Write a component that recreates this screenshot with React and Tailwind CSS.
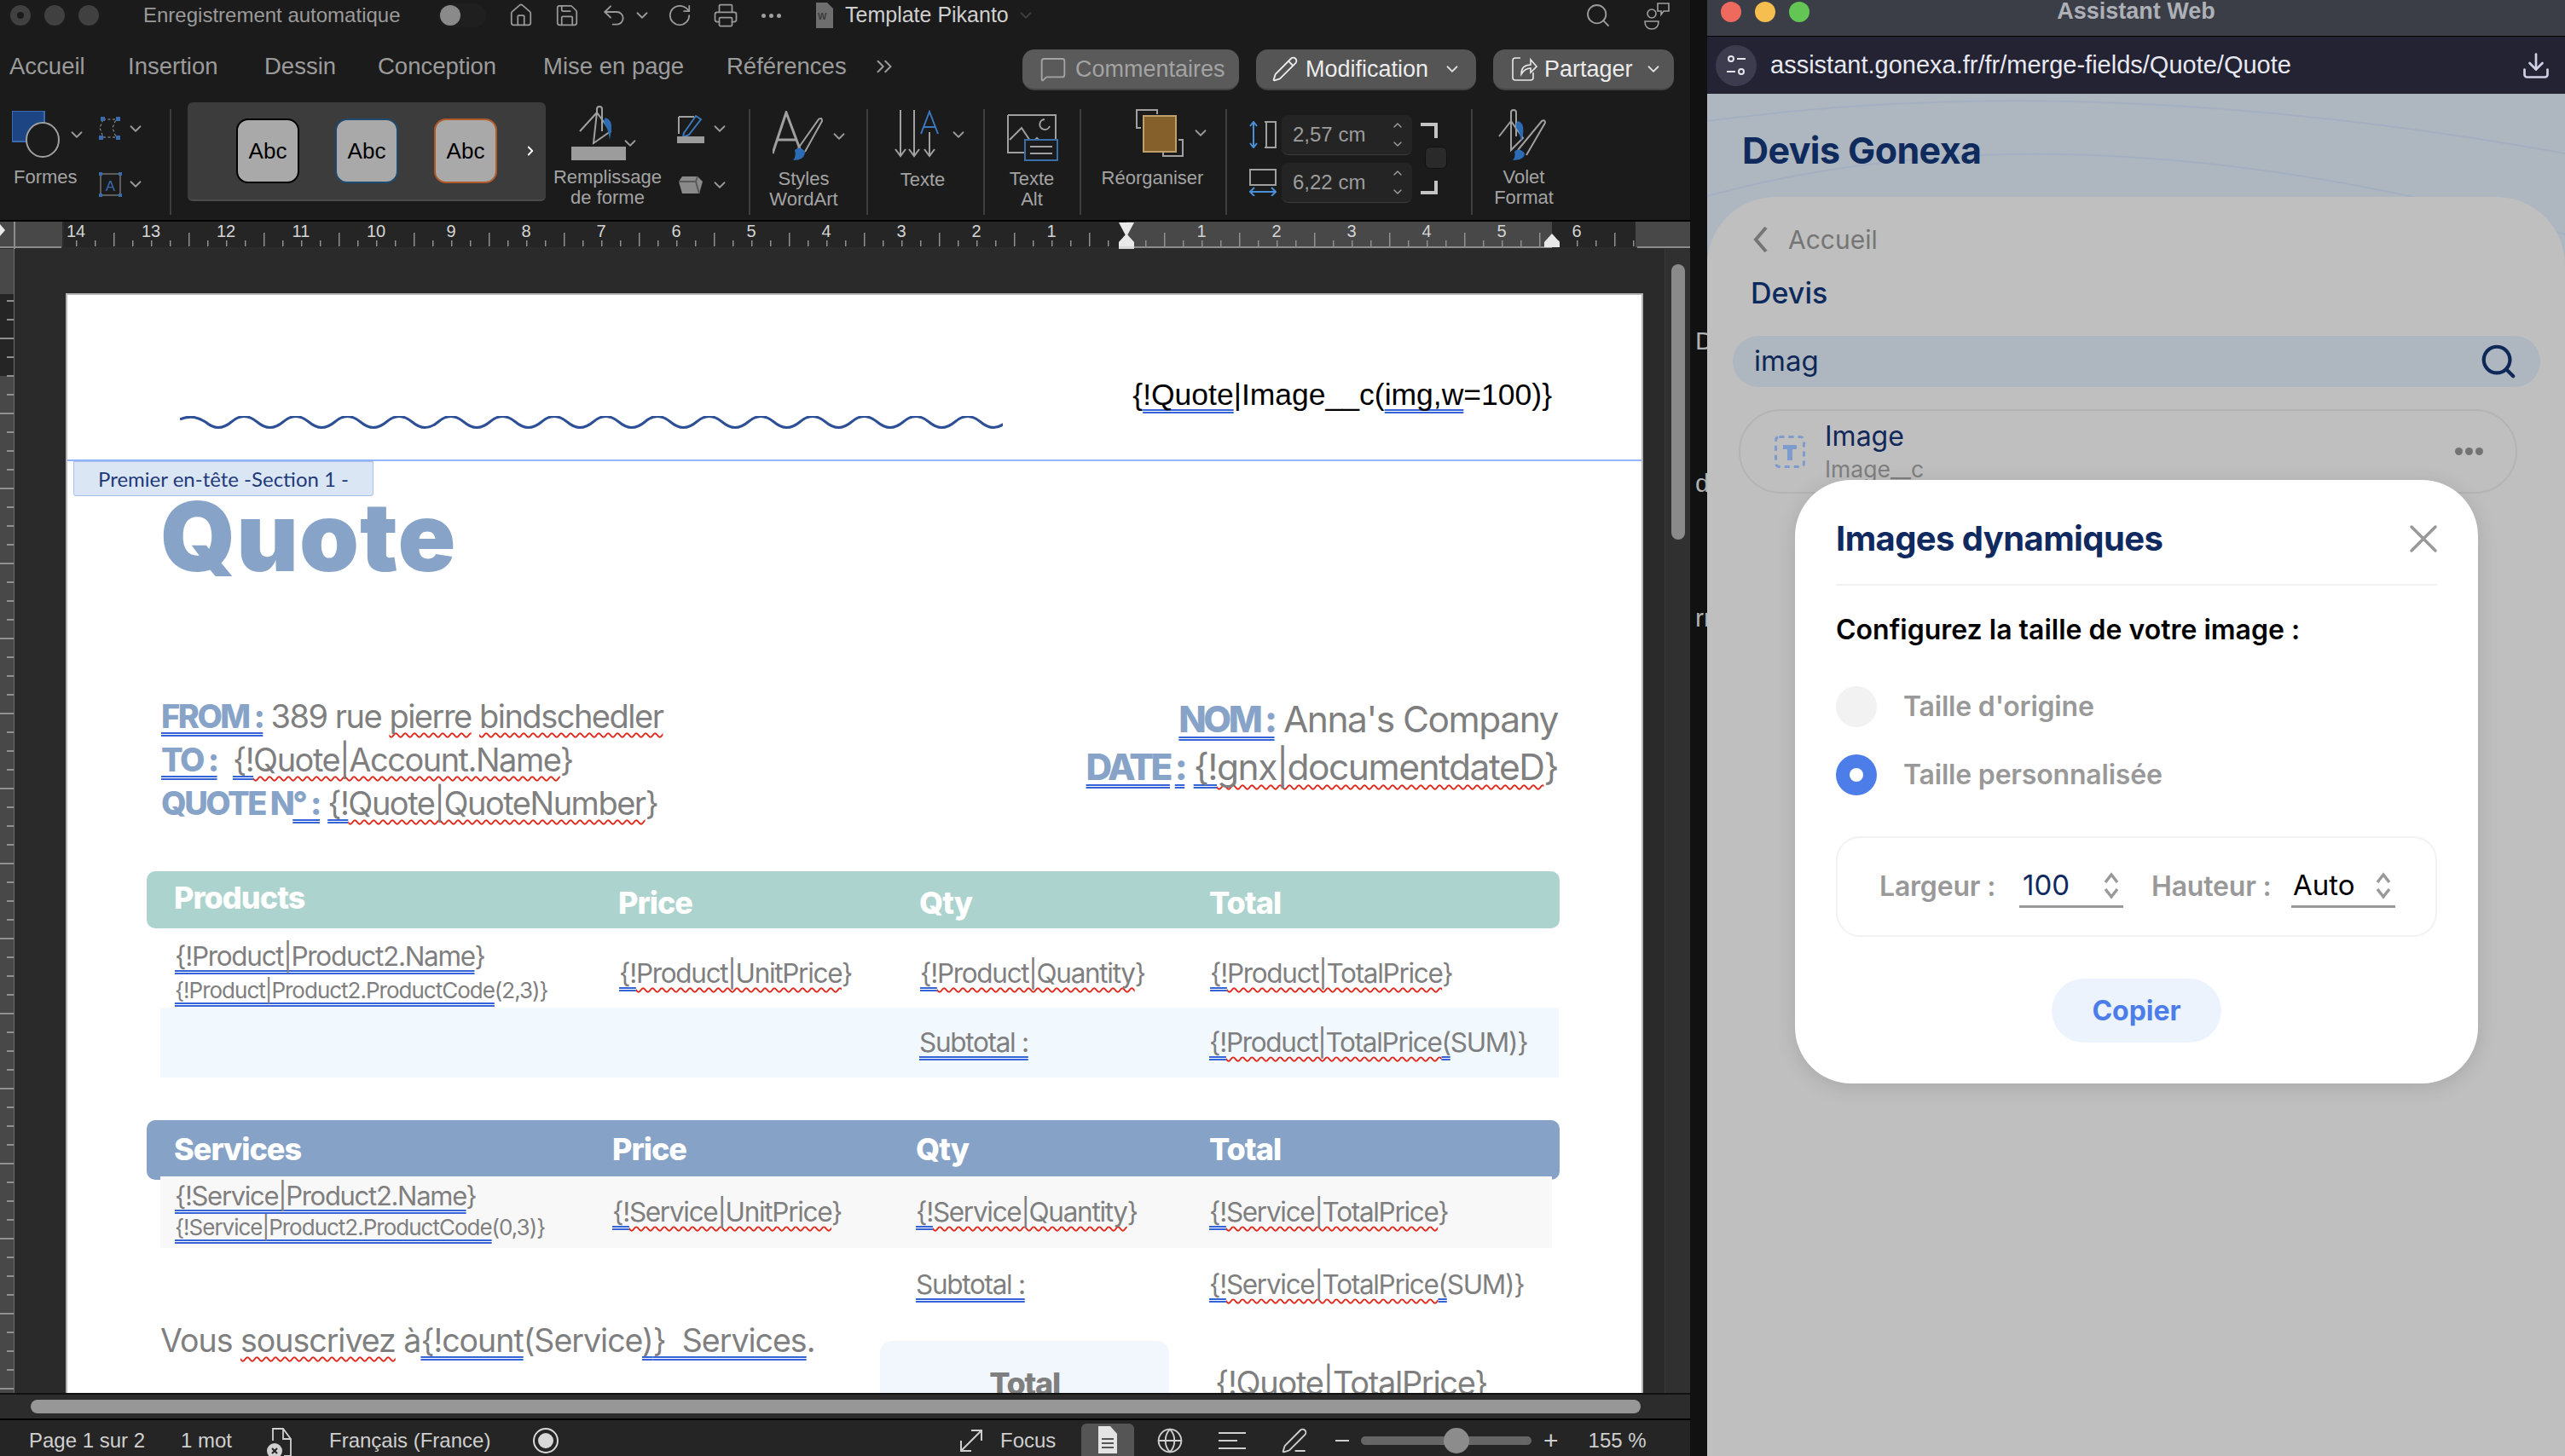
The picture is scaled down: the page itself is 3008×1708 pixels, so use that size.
import React from 'react';
import {
  House, Save, Undo2, RotateCw, Printer, Search, ChevronDown, ChevronRight, ChevronUp,
  ChevronsRight, MessageSquare, Pencil, Globe, X, PenLine, Download,
} from 'lucide-react';

// petit chevron des menus du ruban
const Chev = ({ className = '', tone = 'text-[#9a9a9a]' }) => (
  <div className={`w-[16px] h-[16px] shrink-0 flex items-center justify-center ${tone} ${className}`}>
    <ChevronDown className="w-[22px] h-[22px] shrink-0" strokeWidth={2} />
  </div>
);

const Sep = ({ className = '' }) => <div className={`w-[2px] h-[124px] mt-[8px] bg-[#3e3e3e] shrink-0 ${className}`} />;

const Label = ({ children, className = '' }) => (
  <div className={`text-[22px] leading-[24px] text-[#a3a3a3] text-center ${className}`}>{children}</div>
);

// soulignements de Word : double bleu (grammaire), ondulé rouge (orthographe)
const B = ({ children }) => (
  <span className="underline decoration-double decoration-[#3563d8] decoration-[1.5px] underline-offset-[5px] [text-decoration-skip-ink:none]">{children}</span>
);
const W = ({ children }) => (
  <span className="underline decoration-wavy decoration-[#e0291c] decoration-[1.5px] underline-offset-[5px] [text-decoration-skip-ink:none]">{children}</span>
);
const Field = ({ text }) => (
  <>
    <B>{'{!'}</B>
    <W>{text}</W>
    {'}'}
  </>
);

const wavePath = () => {
  let d = 'M0 4 Q15 -3 30 7';
  for (let x = 30; x < 950; x += 60.6) {
    d += ` Q${x + 15} 20 ${x + 30.3} 7 Q${x + 45} -6 ${x + 60.6} 7`;
  }
  return d;
};

const HRuler = () => {
  const zero = 1321;
  const marks = [];
  for (let x = zero - 14 * 88 - 22; x < 1920; x += 22) marks.push(x);
  const nums = [];
  for (let n = -14; n <= 6; n++) if (n !== 0) nums.push(n);
  return (
    <svg width="1982" height="32" className="block">
      <rect width="1982" height="32" fill="#2b2b2b" />
      <rect x="0" y="0" width="73" height="30" fill="#484848" />
      <rect x="75" y="0" width="1246" height="30" fill="#252525" />
      <rect x="1321" y="0" width="499" height="30" fill="#484848" />
      <rect x="1820" y="0" width="98" height="30" fill="#252525" />
      <rect x="1918" y="0" width="64" height="30" fill="#484848" />
      <rect x="16" y="0" width="2" height="32" fill="#8c8c8c" />
      <rect x="0" y="29" width="72" height="2" fill="#8c8c8c" />
      <rect x="1321" y="29" width="499" height="2" fill="#8c8c8c" />
      <rect x="1920" y="29" width="62" height="2" fill="#8c8c8c" />
      <polygon points="0,3 6,10 0,17" fill="#e8e8e8" />
      {marks.filter((x) => x > 80).map((x) => {
        const long = ((x - zero + 44 + 8800) % 88) === 0;
        return <rect key={x} x={x} y={long ? 13 : 22} width="1.5" height={long ? 16 : 7} fill="#8f8f8f" />;
      })}
      {nums.map((n) => (
        <rect key={`h${n}`} x={zero + n * 88 - 12} y="0" width="24" height="21" fill={n > 0 && n < 6 ? '#484848' : '#252525'} />
      ))}
      {nums.map((n) => (
        <text key={n} x={zero + n * 88} y="18" textAnchor="middle" fontSize="20" fill="#d4d4d4" fontFamily="Liberation Sans">
          {Math.abs(n)}
        </text>
      ))}
      <polygon points="1312,1 1330,1 1321,18" fill="#e8e8e8" />
      <polygon points="1321,14 1330,24 1330,29 1312,29 1312,24" fill="#e8e8e8" />
      <rect x="1312" y="29" width="18" height="3" fill="#d8d8d8" />
      <polygon points="1820,14 1829,24 1829,30 1811,30 1811,24" fill="#e8e8e8" />
    </svg>
  );
};

const VRuler = () => {
  const ticks = [];
  for (let i = 0; i < 62; i++) ticks.push(i);
  return (
    <svg width="17" height="1342" className="block shrink-0">
      <rect width="17" height="53" fill="#484848" />
      <rect y="53" width="17" height="96" fill="#252525" />
      <rect y="149" width="17" height="1193" fill="#484848" />
      <rect x="16" width="1.5" height="1342" fill="#6c6c6c" />
      {ticks.map((i) => (
        <rect key={i} x={i % 4 === 2 ? 0 : 8} y={60 + i * 22} width={i % 4 === 2 ? 16 : 8} height="2" fill="#8f8f8f" />
      ))}
    </svg>
  );
};

const Dark = ({ className = '', children }) => (
  <svg viewBox="0 0 64 64" fill="none" stroke="#a0a0a0" strokeWidth="2" className={`shrink-0 ${className}`}>
    {children}
  </svg>
);

const TitleBar = () => (
  <div className="h-[36px] flex items-center text-[#9a9a9a]">
    <div className="ml-[12px] flex gap-[16px]">
      <div className="w-[24px] h-[24px] rounded-full bg-[#404040] flex items-center justify-center">
        <div className="w-[8px] h-[8px] rounded-full bg-[#1b1b1b]" />
      </div>
      <div className="w-[24px] h-[24px] rounded-full bg-[#404040]" />
      <div className="w-[24px] h-[24px] rounded-full bg-[#404040]" />
    </div>
    <div className="ml-[52px] text-[24px] font-medium w-[304px] whitespace-nowrap">Enregistrement automatique</div>
    <div className="ml-[42px] w-[56px] h-[28px] rounded-full bg-[#1f1f1f] flex items-center pl-[2px]">
      <div className="w-[24px] h-[24px] rounded-full bg-[#8a8a8a]" />
    </div>
    <House className="ml-[26px] w-[30px] h-[30px]" strokeWidth={1.4} />
    <Save className="ml-[24px] w-[30px] h-[30px]" strokeWidth={1.4} />
    <Undo2 className="ml-[24px] w-[32px] h-[32px]" strokeWidth={1.4} />
    <Chev className="ml-[9px]" />
    <RotateCw className="ml-[21px] w-[30px] h-[30px]" strokeWidth={1.4} />
    <Printer className="ml-[24px] w-[30px] h-[30px]" strokeWidth={1.4} />
    <div className="ml-[27px] flex gap-[4px]">
      <div className="w-[5px] h-[5px] rounded-full bg-[#a0a0a0]" />
      <div className="w-[5px] h-[5px] rounded-full bg-[#a0a0a0]" />
      <div className="w-[5px] h-[5px] rounded-full bg-[#a0a0a0]" />
    </div>
    <svg viewBox="0 0 22 30" className="ml-[40px] w-[22px] h-[30px] shrink-0">
      <path d="M1 0h13l7 7v23H1z" fill="#6e6e6e" />
      <text x="3" y="20" fontSize="11" fill="#3c3c3c" fontFamily="Liberation Sans" fontWeight="700">W</text>
    </svg>
    <div className="ml-[13px] text-[25px] text-[#cfcfcf] whitespace-nowrap w-[196px]">Template Pikanto</div>
    <Chev className="ml-[8px]" tone="text-[#3f3f3f]" />
    <div className="flex-1" />
    <Search className="w-[32px] h-[32px]" strokeWidth={1.4} />
    <svg viewBox="0 0 34 34" fill="none" stroke="#a0a0a0" strokeWidth="1.6" className="ml-[36px] mr-[22px] w-[34px] h-[34px]">
      <circle cx="11" cy="15" r="5" />
      <path d="M3 24h16c0 6-3 9-8 9s-8-3-8-9z" />
      <path d="M18 3h13v9h-6l-3 4v-4h-4z" />
    </svg>
  </div>
);

const TabBar = () => (
  <div className="h-[84px] flex items-center text-[27.5px] text-[#9b9b9b] relative">
    <div className="ml-[11px] w-[139px]">Accueil</div>
    <div className="w-[160px]">Insertion</div>
    <div className="w-[133px]">Dessin</div>
    <div className="w-[194px]">Conception</div>
    <div className="w-[215px] whitespace-nowrap">Mise en page</div>
    <div className="w-[170px]">Références</div>
    <ChevronsRight className="w-[30px] h-[30px]" strokeWidth={1.6} />
    <div className="ml-[147px] mt-[8px] w-[254px] h-[48px] rounded-[14px] bg-[#5a5a5a] border-b-2 border-[#444] flex items-center pl-[20px] gap-[10px] text-[#a3a3a3] text-[27px]">
      <MessageSquare className="w-[32px] h-[32px]" strokeWidth={1.4} />
      Commentaires
    </div>
    <div className="ml-[20px] mt-[8px] w-[258px] h-[48px] rounded-[14px] bg-[#555555] border-b-2 border-[#444] flex items-center pl-[18px] gap-[8px] text-[#ececec] text-[27px]">
      <Pencil className="w-[32px] h-[32px]" strokeWidth={1.4} />
      Modification
      <Chev className="ml-[12px]" tone="text-[#dddddd]" />
    </div>
    <div className="ml-[20px] mt-[8px] w-[212px] h-[48px] rounded-[14px] bg-[#555555] border-b-2 border-[#444] flex items-center pl-[20px] gap-[8px] text-[#ececec] text-[27px]">
      <svg viewBox="0 0 32 32" fill="none" stroke="#e8e8e8" strokeWidth="1.6" className="w-[32px] h-[32px] shrink-0">
        <path d="M12 3H6a3 3 0 0 0-3 3v20a3 3 0 0 0 3 3h18a3 3 0 0 0 3-3v-6" />
        <path d="M13 22c0-7 4-11 11-11V5l7 8-7 7v-5c-5 0-8 2-11 7z" />
      </svg>
      Partager
      <Chev className="ml-[8px]" tone="text-[#dddddd]" />
    </div>
  </div>
);

const Swatch = ({ border }) => (
  <div className={`w-[74px] h-[76px] rounded-[14px] bg-[#a9a9a9] border-2 ${border} flex items-center justify-center text-[26px] text-black`}>
    Abc
  </div>
);

const Stepper = ({ value }) => (
  <div className="w-[153px] h-[47px] rounded-[8px] bg-[#242424] border-b border-[#3b3b3b] flex items-center pl-[13px] text-[24px] text-[#9c9c9c]">
    <div className="w-[115px] whitespace-nowrap">{value}</div>
    <div className="flex flex-col gap-[6px]">
      <ChevronUp className="w-[16px] h-[16px] text-[#a0a0a0]" strokeWidth={2} />
      <ChevronDown className="w-[16px] h-[16px] text-[#a0a0a0]" strokeWidth={2} />
    </div>
  </div>
);

const Ribbon = () => (
  <div className="h-[138px] flex items-start text-[#a3a3a3]">
    {/* Formes */}
    <div className="w-[199px] flex shrink-0">
      <div className="ml-[14px] w-[100px] pt-[8px]">
        <div className="flex items-center h-[60px]">
          <svg viewBox="0 0 56 56" className="w-[56px] h-[56px] shrink-0">
            <rect x="0" y="0" width="38" height="36" fill="#1d4583" stroke="#3a6ab0" strokeWidth="2" />
            <ellipse cx="36" cy="34" rx="19" ry="20" fill="#1b1b1b" stroke="#a0a0a0" strokeWidth="2" />
          </svg>
          <Chev className="ml-[12px]" />
        </div>
        <Label className="mt-[8px] ml-[2px] text-left">Formes</Label>
      </div>
      <div className="pt-[18px]">
        <div className="flex items-center h-[26px]">
          <Dark className="w-[32px] h-[32px]">
            <path d="M14 10h30l-8 20 8 22H14l-8-22z" strokeDasharray="6 5" />
            <path d="M8 4h10v10H8zM44 4h10v10H44zM4 48h10v10H4zM44 48h10v10H44z" fill="#3a6ab0" stroke="none" />
          </Dark>
          <Chev className="ml-[5px]" />
        </div>
        <div className="flex items-center h-[32px] mt-[36px]">
          <Dark className="w-[32px] h-[32px]">
            <rect x="8" y="8" width="46" height="50" />
            <text x="31" y="47" textAnchor="middle" fontSize="34" fill="#3a6ab0" stroke="none" fontFamily="Liberation Sans">A</text>
            <path d="M4 4h8v8H4zM50 4h8v8h-8zM4 54h8v8H4zM50 54h8v8h-8z" fill="#3a6ab0" stroke="none" />
          </Dark>
          <Chev className="ml-[5px]" />
        </div>
      </div>
    </div>
    <Sep />
    {/* galerie des styles */}
    <div className="ml-[19px] w-[420px] h-[116px] rounded-[6px] bg-[#3c3c3c] border-b-2 border-[#4c4c4c] flex items-center pl-[57px] gap-[42px] shrink-0">
      <Swatch border="border-black" />
      <Swatch border="border-[#1d4a6e]" />
      <Swatch border="border-[#b05a2a]" />
      <ChevronRight className="-ml-[12px] w-[18px] h-[18px] text-white" strokeWidth={2.4} />
    </div>
    {/* Remplissage */}
    <div className="ml-[8px] w-[129px] shrink-0 flex flex-col items-center">
      <div className="h-[64px] mt-[4px] -ml-[22px] flex items-start relative">
        <svg viewBox="0 0 64 64" fill="none" className="w-[64px] h-[64px]">
          <path d="M10 30 L30 8 V4 a3 3 0 0 1 6 0 V30 M30 8 L46 30 L26 44 Z" stroke="#a0a0a0" strokeWidth="2" />
          <path d="M40 14 q8 2 7 14 l-2 12 q-2 -14 -6 -18 q-2 -5 1 -8z" fill="#2c6cb4" />
          <rect x="0" y="48" width="64" height="16" fill="#9c9c9c" />
        </svg>
      </div>
      <Label className="mt-[8px] whitespace-nowrap">Remplissage<br />de forme</Label>
    </div>
    <Chev className="-ml-[46px] mt-[40px]" />
    <div className="ml-[47px] pt-[14px] w-[66px] shrink-0">
      <div className="flex items-center">
        <svg viewBox="0 0 32 34" fill="none" className="w-[32px] h-[34px]">
          <path d="M2 3h18M2 3v20" stroke="#a0a0a0" strokeWidth="2" />
          <path d="M8 22l14-20 6 4-14 18-7 3z" stroke="#3a78c0" strokeWidth="2" />
          <rect y="26" width="32" height="8" fill="#9c9c9c" />
        </svg>
        <Chev className="ml-[10px]" />
      </div>
      <div className="flex items-center mt-[36px]">
        <svg viewBox="0 0 32 26" fill="none" strokeWidth="2" className="w-[32px] h-[26px]">
          <path d="M6 3h18l6 6-4 14H6L2 9z" fill="#8a8a8a" />
          <path d="M2 9h20l4 14M22 9l2-6" stroke="#5a5a5a" />
        </svg>
        <Chev className="ml-[10px]" />
      </div>
    </div>
    <Sep className="ml-[18px]" />
    {/* Styles WordArt */}
    <div className="w-[137px] shrink-0 relative flex flex-col items-center">
      <div className="h-[60px] mt-[10px] flex items-center">
        <svg viewBox="0 0 64 60" fill="none" className="w-[64px] h-[60px]">
          <path d="M0 50 L16 2 L34 50 M6 34 H28" stroke="#a0a0a0" strokeWidth="3" />
          <path d="M30 44 L54 10 q4 -3 4 2 L38 48" stroke="#a0a0a0" strokeWidth="2" />
          <path d="M26 46 q6 -6 12 2 q0 10 -14 10 q4 -4 2 -12z" fill="#2c6cb4" />
        </svg>
        <Chev className="ml-[6px]" />
      </div>
      <Label className="mt-[8px] whitespace-nowrap -ml-[12px]">Styles<br />WordArt</Label>
    </div>
    <Sep className="-ml-[1px]" />
    {/* Texte */}
    <div className="w-[136px] shrink-0 flex flex-col items-center">
      <div className="h-[60px] mt-[8px] flex items-center ml-[8px]">
        <svg viewBox="0 0 58 58" fill="none" stroke="#a0a0a0" strokeWidth="2" className="w-[58px] h-[58px]">
          <path d="M8 0v54M2 46l6 8 6-8M24 0v54M18 46l6 8 6-8M42 26v28M36 46l6 8 6-8" />
          <path d="M32 28L42 2l10 26M35 20h14" stroke="#3a78c0" />
        </svg>
        <Chev className="ml-[10px]" />
      </div>
      <Label className="mt-[11px] -ml-[8px]">Texte</Label>
    </div>
    <Sep className="-ml-[1px]" />
    <div className="w-[112px] shrink-0 flex flex-col items-center">
      <svg viewBox="0 0 60 56" fill="none" stroke="#a0a0a0" strokeWidth="2" className="w-[60px] h-[56px] mt-[14px]">
        <path d="M1 1h56v30M1 1v44h20" />
        <path d="M3 30l14-14 12 18 6-6 6 6M44 6a6 6 0 1 0 6 8" />
        <rect x="21" y="30" width="38" height="24" stroke="#3a6ea8" fill="#1b1b1b" />
        <path d="M27 38h26M27 46h26" />
      </svg>
      <Label className="mt-[8px] -ml-[2px]">Texte<br />Alt</Label>
    </div>
    <Sep className="-ml-[1px]" />
    {/* Réorganiser */}
    <div className="w-[170px] shrink-0 flex flex-col items-center">
      <div className="h-[56px] mt-[8px] flex items-center ml-[42px]">
        <svg viewBox="0 0 56 56" fill="none" stroke="#a0a0a0" strokeWidth="2" className="w-[56px] h-[56px]">
          <path d="M6 22H1V1h24v5M50 36h5v19H32v-5" />
          <rect x="9" y="8" width="38" height="42" fill="#86602a" stroke="#c0a06a" />
        </svg>
        <Chev className="ml-[12px]" />
      </div>
      <Label className="mt-[13px] -ml-[3px]">Réorganiser</Label>
    </div>
    <Sep className="-ml-[1px]" />
    {/* Taille */}
    <div className="ml-[26px] w-[34px] shrink-0 pt-[22px]">
      <svg viewBox="0 0 32 32" fill="none" strokeWidth="2" className="w-[32px] h-[32px]">
        <path d="M5 1v30M1 6l4-5 4 5M1 26l4 5 4-5" stroke="#4a90d8" />
        <path d="M18 1h13v30H18M20 1v30" stroke="#a0a0a0" />
      </svg>
      <svg viewBox="0 0 32 32" fill="none" strokeWidth="2" className="w-[32px] h-[32px] mt-[24px]">
        <rect x="1" y="1" width="30" height="18" stroke="#a0a0a0" />
        <path d="M1 27h30M6 22l-5 5 5 5M26 22l5 5-5 5" stroke="#4a90d8" />
      </svg>
    </div>
    <div className="ml-[4px] pt-[15px] flex flex-col gap-[9px] shrink-0">
      <Stepper value="2,57 cm" />
      <Stepper value="6,22 cm" />
    </div>
    <div className="ml-[10px] w-[32px] pt-[24px] shrink-0">
      <div className="w-[20px] h-[18px] border-t-[4px] border-r-[4px] border-[#c4c4c4]" />
      <div className="ml-[5px] mt-[10px] w-[26px] h-[26px] rounded-[6px] bg-[#2a2a2a] border border-[#111]" />
      <div className="mt-[14px] w-[20px] h-[16px] border-b-[4px] border-r-[4px] border-[#c4c4c4]" />
    </div>
    <Sep className="ml-[27px]" />
    {/* Volet */}
    <div className="w-[118px] shrink-0 flex flex-col items-center">
      <svg viewBox="0 0 60 60" fill="none" className="w-[60px] h-[60px] mt-[8px]">
        <path d="M2 32L16 14V4a3 3 0 0 1 6 0v28M16 14l14 20-14 14z" stroke="#a0a0a0" strokeWidth="2" />
        <path d="M24 14q8 2 6 16l-2 8q-2-12-6-16q-1-5 2-8z" fill="#2c6cb4" />
        <path d="M24 48L52 14q4-2 4 2L34 54" stroke="#a0a0a0" strokeWidth="2" />
        <path d="M20 50q6-6 12 2q0 8-14 8q4-4 2-10z" fill="#2c6cb4" />
      </svg>
      <Label className="mt-[8px] ml-[2px]">Volet<br />Format</Label>
    </div>
  </div>
);

// en-têtes et lignes des tableaux : mêmes colonnes que le document
const Document = () => (
  <div className="w-[1850px] h-[1290px] shrink-0 relative bg-white border-l-2 border-t-2 border-r-2 border-[#b5b5b5] overflow-hidden font-['Inter',sans-serif] text-[#7f7f7f]">
    <div className="h-[195px] border-b-2 border-[#93b4ff] flex items-start justify-between">
      <svg width="965" height="24" fill="none" className="ml-[132px] mt-[142px] block">
        <path d={wavePath()} stroke="#2c4f96" strokeWidth="3" />
      </svg>
      <div className="mt-[96px] mr-[105px] text-[35.5px] leading-[42px] text-black font-['Liberation_Sans',sans-serif] whitespace-nowrap">
        {'{'}<B>!Quote</B>|Image__c(<B>img,w</B>=100)}
      </div>
    </div>
    <div className="absolute left-[7px] top-[195px] w-[352px] h-[41px] bg-[#dbe6f5] border border-[#a8c0f0] rounded-b-[3px] flex items-center pl-[28px] text-[24px] text-[#1f3a7a] font-['Lato',sans-serif] whitespace-nowrap">
      Premier en-tête -Section 1 -
    </div>

    <div className="ml-[109px] mt-[46px] text-[112px] leading-[84px] font-black text-[#88a3c8] tracking-[1px]">Quote</div>

    <div className="mt-[143px] ml-[110px] mr-[98px] flex justify-between text-[38px] tracking-[-1.5px] whitespace-nowrap">
      <div>
        <div className="h-[52px] leading-[52px]">
          <span className="font-extrabold text-[#88a3c8] tracking-[-2.5px]"><B>FROM :</B></span> 389 rue <W>pierre</W> <W>bindschedler</W>
        </div>
        <div className="h-[50px] leading-[50px]">
          <span className="font-extrabold text-[#88a3c8] tracking-[-2.5px]"><B>TO :</B></span>&nbsp; <Field text="Quote|Account.Name" />
        </div>
        <div className="h-[52px] leading-[52px]">
          <span className="font-extrabold text-[#88a3c8] tracking-[-2.5px]">QUOTE N<B>° :</B></span> <Field text="Quote|QuoteNumber" />
        </div>
      </div>
      <div className="text-right text-[42.5px] pt-[2px]">
        <div className="h-[56px] leading-[56px]">
          <span className="font-extrabold text-[#88a3c8] tracking-[-3.5px]"><B>NOM :</B></span> Anna's Company
        </div>
        <div className="h-[56px] leading-[56px]">
          <span className="font-extrabold text-[#88a3c8] tracking-[-3.5px]"><B>DATE</B> <B>:</B></span> <Field text="gnx|documentdateD" />
        </div>
      </div>
    </div>

    {/* Products */}
    <div className="mt-[54px] ml-[93px] w-[1657px] text-[31.5px] tracking-[-1.3px] whitespace-nowrap">
      <div className="h-[67px] rounded-[10px] bg-[#acd3cd] grid grid-cols-[553px_353px_340px_1fr] items-center pl-[32px] text-white font-extrabold text-[36px] tracking-[-1px]">
        <div className="-ml-[32px] pl-[32px] -mt-[6px]">Products</div>
        <div className="-ml-[32px] mt-[6px]">Price</div>
        <div className="-ml-[32px] mt-[6px]">Qty</div>
        <div className="-ml-[32px] mt-[6px]">Total</div>
      </div>
      <div className="h-[93px] pt-[12px] grid grid-cols-[553px_353px_340px_1fr] items-center pl-[33px]">
        <div className="-ml-[32px] pl-[32px]">
          <div className="text-[31.5px] leading-[38px] -mt-[1px]"><B>{'{!Product|Product2.Name'}</B>{'}'}</div>
          <div className="text-[26px] leading-[34px] tracking-[-1px] mt-[4px]"><B>{'{!Product|Product2.ProductCode'}</B>{'(2,3)}'}</div>
        </div>
        <div className="-ml-[32px]"><Field text="Product|UnitPrice" /></div>
        <div className="-ml-[32px]"><Field text="Product|Quantity" /></div>
        <div className="-ml-[32px]"><Field text="Product|TotalPrice" /></div>
      </div>
      <div className="ml-[16px] w-[1640px] h-[82px] bg-[#f1f8fe] grid grid-cols-[890px_340px_1fr] items-center">
        <div />
        <div><B>Subtotal :</B></div>
        <div><B>{'{!'}</B><W>Product|TotalPrice</W><B>(</B>{'SUM)}'}</div>
      </div>

      {/* Services */}
      <div className="mt-[50px] relative h-[66px]">
        <div className="absolute inset-x-0 top-0 h-[70px] rounded-[10px] bg-[#87a2c7]" />
        <div className="relative h-[66px] pt-[2px] grid grid-cols-[546px_356px_344px_1fr] items-center pl-[32px] text-white font-extrabold text-[36px] tracking-[-1px]">
          <div className="-ml-[32px] pl-[32px]">Services</div>
          <div className="-ml-[32px]">Price</div>
          <div className="-ml-[32px]">Qty</div>
          <div className="-ml-[32px]">Total</div>
        </div>
      </div>
      <div className="relative ml-[16px] w-[1632px] h-[84px] bg-[#f8f8f8] grid grid-cols-[530px_356px_344px_1fr] items-center">
        <div className="pl-[17px]">
          <div className="text-[31px] leading-[38px] -mt-[3px]"><B>{'{!Service|Product2.Name'}</B>{'}'}</div>
          <div className="text-[26px] leading-[34px] tracking-[-1px] mt-[1px]"><B>{'{!Service|Product2.ProductCode'}</B>{'(0,3)}'}</div>
        </div>
        <div><Field text="Service|UnitPrice" /></div>
        <div><Field text="Service|Quantity" /></div>
        <div><Field text="Service|TotalPrice" /></div>
      </div>
      <div className="h-[88px] ml-[16px] -mt-[1px] grid grid-cols-[886px_344px_1fr] items-center">
        <div />
        <div><B>Subtotal :</B></div>
        <div><B>{'{!'}</B><W>Service|TotalPrice</W><B>(</B>{'SUM)}'}</div>
      </div>

      <div className="ml-[16px] flex items-start">
        <div className="w-[844px] text-[37.5px] leading-[44px] tracking-[-1px]">
          Vous <W>souscrivez</W> à<B>{'{!count'}</B>(Service<B>)</B><B>{'}\u00A0 Services'}</B>.
        </div>
        <div className="mt-[22px] w-[339px] h-[80px] rounded-t-[14px] bg-[#f1f7fd] flex justify-center pt-[28px] font-extrabold text-[36px] leading-[44px]">Total</div>
        <div className="ml-[54px] pt-[49px] text-[38px] leading-[44px]">{'{!Quote|TotalPrice}'}</div>
      </div>
    </div>
  </div>
);

const StatusBar = () => (
  <div className="h-[44px] pt-[6px] bg-[#252525] border-t-2 border-black flex items-center text-[24px] text-[#bdbdbd] whitespace-nowrap">
    <div className="ml-[34px] w-[178px] text-[#d0d0d0]">Page 1 sur 2</div>
    <div className="w-[100px] text-[#d0d0d0]">1 mot</div>
    <svg viewBox="0 0 32 38" fill="none" stroke="#d0d0d0" strokeWidth="1.8" className="w-[32px] h-[38px] shrink-0 mt-[6px]">
      <path d="M8 16V2h12l9 12v20h-8M20 2v12h9" />
      <circle cx="10" cy="28" r="9" fill="#cfcfcf" stroke="none" />
      <path d="M7 25l6 6M13 25l-6 6" stroke="#222" strokeWidth="2" />
    </svg>
    <div className="ml-[42px] w-[239px] text-[#d0d0d0]">Français (France)</div>
    <div className="w-[30px] h-[30px] rounded-full border-2 border-[#d8d8d8] flex items-center justify-center shrink-0">
      <div className="w-[18px] h-[18px] rounded-full bg-[#d8d8d8]" />
    </div>
    <svg viewBox="0 0 28 28" fill="none" stroke="#cfcfcf" strokeWidth="2" className="ml-[470px] w-[28px] h-[28px] shrink-0">
      <path d="M2 26L26 2M14 2h12v12M2 14v12h12" />
    </svg>
    <div className="ml-[20px] w-[95px] text-[#cfcfcf]">Focus</div>
    <div className="w-[62px] h-[38px] bg-[#555555] rounded-t-[6px] flex items-center justify-center self-end shrink-0">
      <svg viewBox="0 0 24 32" className="w-[24px] h-[32px]">
        <path d="M1 0h14l8 9v23H1z" fill="#e4e4e4" />
        <path d="M5 15h14M5 20h14M5 25h14" stroke="#555" strokeWidth="2" />
      </svg>
    </div>
    <Globe className="ml-[26px] w-[32px] h-[32px] text-[#cfcfcf]" strokeWidth={1.4} />
    <div className="ml-[41px] w-[32px] flex flex-col gap-[7px] shrink-0">
      <div className="h-[2px] w-[32px] bg-[#cfcfcf]" />
      <div className="h-[2px] w-[22px] bg-[#cfcfcf]" />
      <div className="h-[2px] w-[32px] bg-[#cfcfcf]" />
    </div>
    <PenLine className="ml-[41px] w-[32px] h-[32px] text-[#cfcfcf]" strokeWidth={1.4} />
    <div className="ml-[32px] w-[16px] h-[2px] bg-[#cfcfcf] shrink-0" />
    <div className="ml-[14px] w-[200px] h-[10px] rounded-full bg-[#666666] relative shrink-0">
      <div className="absolute left-[97px] -top-[10px] w-[30px] h-[30px] rounded-full bg-[#8c8c8c]" />
    </div>
    <div className="ml-[14px] text-[30px] leading-none text-[#cfcfcf]">+</div>
    <div className="ml-[35px] text-[#cfcfcf]">155 %</div>
  </div>
);

const WordWindow = () => (
  <div className="w-[1982px] h-[1708px] shrink-0 flex flex-col bg-[#1b1b1b]">
    <TitleBar />
    <TabBar />
    <Ribbon />
    <div className="h-[2px] bg-black" />
    <HRuler />
    <div className="h-[1342px] flex bg-[#2a2a2a] overflow-hidden">
      <VRuler />
      <div className="w-[1935px] pl-[60px] pt-[52px] shrink-0">
        <Document />
      </div>
      <div className="w-[30px] bg-[#303030] border-l border-[#3a3a3a] pt-[18px] pl-[7px] shrink-0">
        <div className="w-[16px] h-[323px] rounded-full bg-[#8a8a8a]" />
      </div>
    </div>
    <div className="h-[30px] bg-[#2c2c2c] border-t-2 border-[#111] pl-[36px] pt-[6px]">
      <div className="w-[1888px] h-[16px] rounded-full bg-[#979797]" />
    </div>
    <StatusBar />
  </div>
);

const Spin = () => (
  <svg viewBox="0 0 20 32" fill="none" stroke="#999999" strokeWidth="3.4" className="w-[20px] h-[32px] shrink-0">
    <path d="M3 12l7-9 7 9M3 20l7 9 7-9" />
  </svg>
);

const Assistant = () => (
  <div className="w-[1006px] h-[1708px] shrink-0 flex flex-col font-['Inter',sans-serif]">
    <div className="h-[42px] bg-[#3b3e46] relative flex items-start justify-center font-['Liberation_Sans',sans-serif]">
      <div className="absolute left-[16px] top-[2px] flex gap-[16px]">
        <div className="w-[24px] h-[24px] rounded-full bg-[#ee6a5f]" />
        <div className="w-[24px] h-[24px] rounded-full bg-[#f6be4f]" />
        <div className="w-[24px] h-[24px] rounded-full bg-[#62c554]" />
      </div>
      <div className="text-[27px] leading-[26px] font-bold text-[#adb0b6]">Assistant Web</div>
    </div>
    <div className="h-[68px] bg-[#232333] border-t border-black flex items-center pl-[10px] pr-[16px] font-['Liberation_Sans',sans-serif]">
      <div className="w-[48px] h-[48px] rounded-full bg-[#3c3c4e] flex items-center justify-center shrink-0">
        <svg viewBox="0 0 24 26" fill="none" stroke="#e6e6ee" strokeWidth="2" className="w-[24px] h-[26px]">
          <circle cx="6" cy="5" r="3" />
          <path d="M13 5h10M1 20h10" />
          <circle cx="18" cy="20" r="3" />
        </svg>
      </div>
      <div className="ml-[16px] text-[29px] text-[#e8e8f0] flex-1 whitespace-nowrap">assistant.gonexa.fr/fr/merge-fields/Quote/Quote</div>
      <Download className="w-[36px] h-[36px] text-[#cfcfe6]" strokeWidth={1.8} />
    </div>
    <div className="flex-1 bg-[#aeb7bf] relative overflow-hidden">
      <svg width="1006" height="240" fill="none" stroke="#a4afc2" strokeWidth="2" className="absolute left-0 top-0">
        <path d="M0 32C240 0 560 -10 1006 70" />
        <path d="M0 120C240 55 560 40 1006 165" />
        <path d="M0 190C240 130 560 90 1006 250" />
      </svg>
      <div className="relative ml-[41px] mt-[44px] h-[44px] text-[43px] leading-[44px] font-bold tracking-[-0.6px] text-[#0f2a5c]">Devis Gonexa</div>
      <div className="relative mt-[33px] h-[1480px] rounded-t-[80px] bg-[#bfbfbf] pt-[32px]">
        <div className="flex items-center ml-[53px] h-[36px] text-[30px] text-[#757575]">
          <svg viewBox="0 0 19 32" fill="none" stroke="#757575" strokeWidth="4" className="w-[19px] h-[32px] shrink-0">
            <path d="M16 2L4 16l12 14" />
          </svg>
          <div className="ml-[23px]">Accueil</div>
        </div>
        <div className="ml-[51px] mt-[25px] h-[40px] text-[34px] leading-[40px] font-medium text-[#0d2a5e]">Devis</div>
        <div className="ml-[30px] mt-[30px] w-[947px] h-[60px] rounded-full bg-[#aeb7bf] flex items-center justify-between pl-[25px] pr-[26px]">
          <div className="text-[33px] text-[#0e2857]">imag</div>
          <Search className="w-[46px] h-[46px] text-[#0e2857]" strokeWidth={2.2} />
        </div>
        <div className="ml-[37px] mt-[26px] w-[913px] h-[99px] rounded-[50px] border-2 border-[#b4b4b4] flex items-center pl-[40px]">
          <svg viewBox="0 0 36 38" fill="none" className="w-[36px] h-[38px] shrink-0">
            <rect x="1.5" y="1.5" width="33" height="35" rx="4" stroke="#7f9bce" strokeWidth="3" strokeDasharray="6 5" />
            <path d="M10 11h16v5h-5v13h-6V16h-5z" fill="#7f9bce" />
          </svg>
          <div className="ml-[23px] flex-1 h-[99px] pt-[14px]">
            <div className="text-[32px] leading-[36px] text-[#10285a]">Image</div>
            <div className="text-[26.5px] leading-[36px] text-[#7f7f7f] mt-[2px]">Image__c</div>
          </div>
          <div className="mr-[38px] flex gap-[3px]">
            <div className="w-[9px] h-[9px] rounded-full bg-[#737373]" />
            <div className="w-[9px] h-[9px] rounded-full bg-[#737373]" />
            <div className="w-[9px] h-[9px] rounded-full bg-[#737373]" />
          </div>
        </div>
      </div>

      {/* fenêtre modale au-dessus du panneau */}
      <div className="absolute left-[103px] top-[453px] w-[801px] h-[708px] rounded-[66px] bg-white shadow-[0_4px_24px_rgba(0,0,0,0.12)] px-[48px]">
        <div className="h-[124px] pt-[16px] border-b-2 border-[#f2f2f2] flex items-center justify-between">
          <div className="text-[40px] font-bold tracking-[-0.6px] text-[#10295f]">Images dynamiques</div>
          <X className="w-[56px] h-[56px] text-[#999999] -mr-[12px]" strokeWidth={1.5} />
        </div>
        <div className="mt-[34px] text-[32px] leading-[36px] font-semibold text-black whitespace-nowrap">Configurez la taille de votre image :</div>
        <div className="mt-[48px] flex items-center h-[48px]">
          <div className="w-[48px] h-[48px] rounded-full bg-[#f2f2f2]" />
          <div className="ml-[31px] text-[32px] font-semibold tracking-[-0.2px] text-[#999999]">Taille d'origine</div>
        </div>
        <div className="mt-[32px] flex items-center h-[48px]">
          <div className="w-[48px] h-[48px] rounded-full bg-[#4c7de8] flex items-center justify-center">
            <div className="w-[16px] h-[16px] rounded-full bg-white" />
          </div>
          <div className="ml-[31px] text-[32px] font-semibold tracking-[-0.2px] text-[#999999]">Taille personnalisée</div>
        </div>
        <div className="mt-[48px] h-[118px] rounded-[28px] border-2 border-[#f2f2f2] flex items-center pl-[49px]">
          <div className="w-[164px] text-[32px] font-semibold tracking-[-0.2px] text-[#999999] whitespace-nowrap">Largeur :</div>
          <div className="w-[122px] h-[50px] border-b-[3px] border-[#999999] flex items-center justify-between pl-[4px] pr-[4px] text-[#10295f] text-[33px]">
            100
            <Spin />
          </div>
          <div className="ml-[33px] w-[164px] text-[32px] font-semibold tracking-[-0.2px] text-[#999999] whitespace-nowrap">Hauteur :</div>
          <div className="w-[122px] h-[50px] border-b-[3px] border-[#999999] flex items-center justify-between pl-[2px] pr-[4px] text-black text-[33px]">
            Auto
            <Spin />
          </div>
        </div>
        <div className="mt-[49px] mx-auto w-[199px] h-[75px] rounded-[38px] bg-[#edf3fc] flex items-center justify-center text-[32px] font-bold text-[#4c7de8]">Copier</div>
      </div>
    </div>
  </div>
);

const App = () => (
  <div className="w-[3008px] h-[1708px] flex overflow-hidden bg-[#111111] font-['Liberation_Sans',sans-serif]">
    <WordWindow />
    <div className="w-[20px] shrink-0 bg-[#111111] text-[#b0b0b0] text-[30px] overflow-hidden flex flex-col pl-[6px]">
      <div className="mt-[382px] leading-[36px]">D</div>
      <div className="mt-[131px] leading-[36px]">d</div>
      <div className="mt-[122px] leading-[36px] whitespace-nowrap">rr</div>
    </div>
    <Assistant />
  </div>
);

export default App;
